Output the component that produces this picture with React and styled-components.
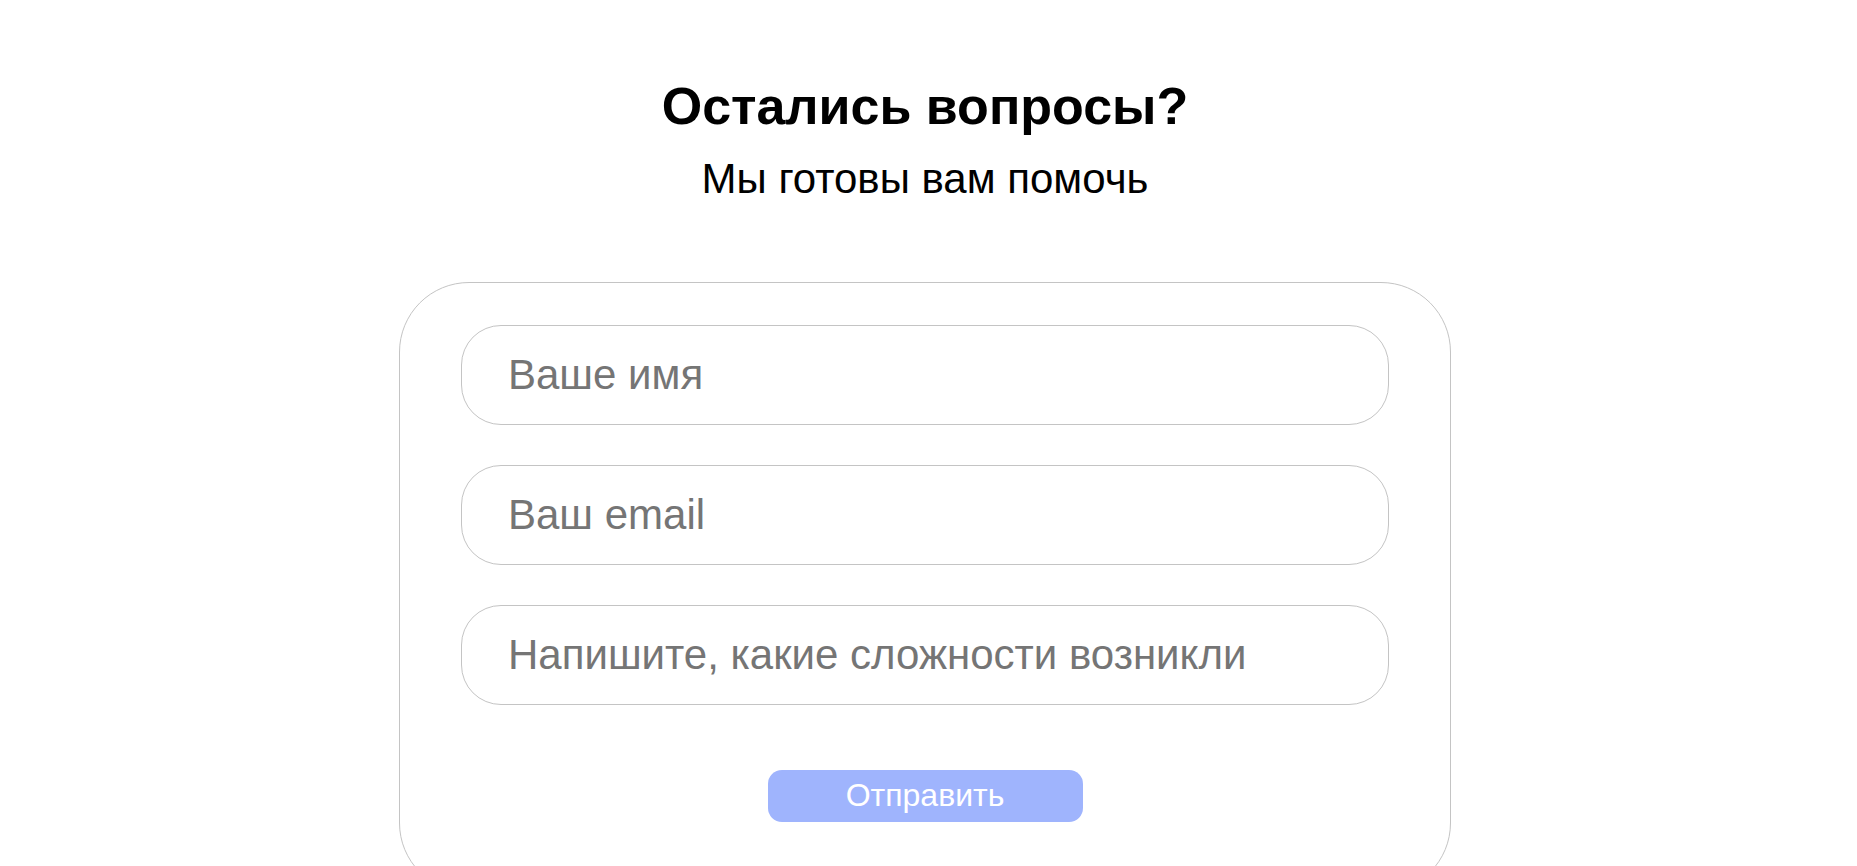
import styled, { createGlobalStyle } from 'styled-components';

const GlobalStyle = createGlobalStyle`
    body {
        margin: 0;
        background: #ffffff;
        font-family: 'Liberation Sans', Arial, sans-serif;
    }
`;

const App = () => {
    return (
        <>
            <GlobalStyle />
            <Section>
                <Title>Остались вопросы?</Title>
                <Subtitle>Мы готовы вам помочь</Subtitle>
                <FormCard onSubmit={(e) => e.preventDefault()}>
                    <Field type="text" placeholder="Ваше имя" />
                    <Field type="email" placeholder="Ваш email" />
                    <Field type="text" placeholder="Напишите, какие сложности возникли" />
                    <SubmitButton type="submit">Отправить</SubmitButton>
                </FormCard>
            </Section>
        </>
    );
};

export default App;

const Section = styled.section`
    display: flex;
    flex-direction: column;
    align-items: center;
    padding: 75px 7px 80px 0;
    color: #000000;
`;

const Title = styled.h2`
    margin: 0;
    font-size: 52px;
    font-weight: 700;
    line-height: 1.2;
`;

const Subtitle = styled.p`
    margin: 17px 0 0;
    font-size: 42px;
    line-height: 1.2;
`;

const FormCard = styled.form`
    box-sizing: border-box;
    width: 1052px;
    margin-top: 77px;
    padding: 42px 61px 70px;
    border: 1px solid #c4c4c4;
    border-radius: 70px;
    display: flex;
    flex-direction: column;
    align-items: center;
    gap: 40px;
`;

const Field = styled.input`
    box-sizing: border-box;
    width: 100%;
    height: 100px;
    padding: 0 46px;
    border: 1px solid #c4c4c4;
    border-radius: 40px;
    font-family: 'Liberation Sans', Arial, sans-serif;
    font-size: 42px;
    color: #333333;
    outline: none;

    &::placeholder {
        color: #757575;
    }
`;

const SubmitButton = styled.button`
    width: 315px;
    height: 52px;
    margin-top: 25px;
    border: none;
    border-radius: 14px;
    background: #9fb4fd;
    color: #ffffff;
    font-family: 'Liberation Sans', Arial, sans-serif;
    font-size: 32px;
    cursor: pointer;
`;
